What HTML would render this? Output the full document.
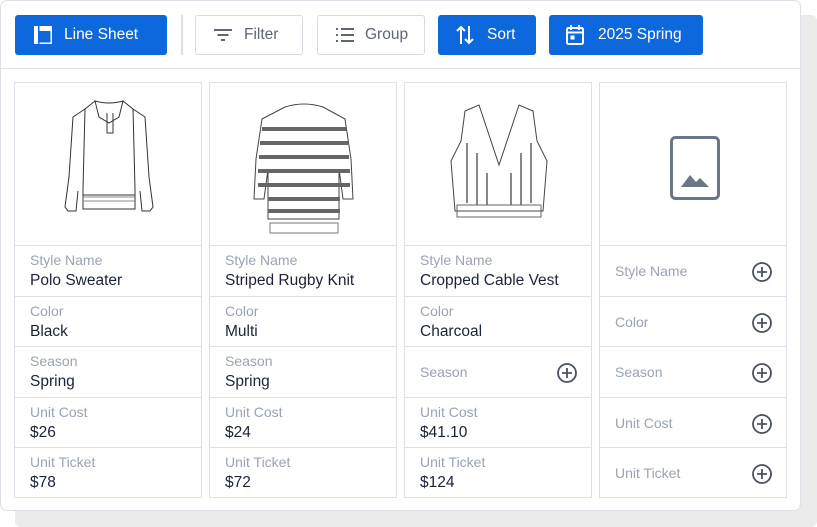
<!DOCTYPE html>
<html><head><meta charset="utf-8"><style>
*{box-sizing:border-box;margin:0;padding:0}
body{width:817px;height:527px;background:#fff;font-family:"Liberation Sans",sans-serif;position:relative;overflow:hidden}
.shadow{position:absolute;left:15px;top:15px;width:802px;height:512px;background:#ebebec;border-radius:6px}
.card{position:absolute;left:0;top:0;width:801px;height:511px;background:#fff;border:1.5px solid #dde1e7;border-radius:7px}
.tb{position:absolute;top:0;left:0;right:0;height:68px;border-bottom:1.5px solid #dde1e7}
.btn{position:absolute;top:14px;height:40px;border-radius:3px;display:flex;align-items:center;font-size:15.5px}
.blue{background:#0d68dd;color:#fff}
.wht{border:1.5px solid #d6dbe2;color:#5d6675;background:#fff}
.btn svg{position:absolute}
.btn span{position:absolute}
.col{position:absolute;top:81px;width:188px;height:416px;border:1.5px solid #dde1e7}
.img{height:163px;border-bottom:1.5px solid #dde1e7;position:relative}
.row{height:50.5px;border-bottom:1.5px solid #dde1e7;position:relative}
.row:last-child{border-bottom:none}
.lb{position:absolute;left:15px;top:6px;font-size:14px;color:#9aa3b2}
.lb.c{top:17px}
.v{position:absolute;left:15px;top:26px;font-size:15.5px;color:#1a2436}
.pl{position:absolute;right:13px;top:15px}
</style></head><body>
<div class="shadow"></div>
<div class="card">
<div class="tb">
 <div class="btn blue" style="left:14px;width:152px"><svg style="left:18px" width="20" height="20" viewBox="0 0 20 20"><rect x="1" y="1" width="18" height="18" fill="#fff"/><rect x="6.5" y="6" width="11" height="11.5" fill="#0d68dd"/><rect x="5" y="1" width="1.5" height="18" fill="#0d68dd"/></svg><span style="left:49px">Line Sheet</span></div>
 <div style="position:absolute;left:180px;top:14px;width:2px;height:40px;background:#dde1e7"></div>
 <div class="btn wht" style="left:194px;width:108px"><svg style="left:16px" width="22" height="20" viewBox="0 0 22 20"><path d="M2 5h18M5.5 10h11M9 15h4" stroke="#5d6675" stroke-width="2"/></svg><span style="left:48px">Filter</span></div>
 <div class="btn wht" style="left:316px;width:108px"><svg style="left:16px" width="22" height="20" viewBox="0 0 22 20"><path d="M2 4h2M7 4h13M2 10h2M7 10h13M2 16h2M7 16h13" stroke="#5d6675" stroke-width="2"/></svg><span style="left:47px">Group</span></div>
 <div class="btn blue" style="left:437px;width:98px"><svg style="left:17px" width="20" height="22" viewBox="0 0 20 22"><path d="M6 20V3M2 7l4-4 4 4M14 2v17M10 15l4 4 4-4" stroke="#fff" stroke-width="2" fill="none"/></svg><span style="left:49px">Sort</span></div>
 <div class="btn blue" style="left:548px;width:154px"><svg style="left:16px" width="20" height="22" viewBox="0 0 20 22"><rect x="2" y="4" width="16" height="16" rx="1.5" stroke="#fff" stroke-width="2" fill="none"/><path d="M2 8.5h16M6 1v5M14 1v5" stroke="#fff" stroke-width="2"/><rect x="5.5" y="11.5" width="4" height="4" fill="#fff"/></svg><span style="left:49px">2025 Spring</span></div>
</div>

<div class="col" style="left:13px"><div class="img"><svg width="188" height="163" viewBox="0 0 188 163" fill="none" stroke="#333" stroke-width="1"><path d="M80 18l-10 8-12 8-4 60-4 30 3 4 8 0 2-20M108 18l10 8 12 8 4 60 4 30-3 4-8 0-2-20M70 26l-2 80 0 20 52 0 0-20-2-80M80 18q14 4 28 0l-4 16-10 6-10-6z"/><path d="M68 112h52M92 30v20h6V30" /><path d="M68 114l52 0M68 118h52" stroke="#888"/></svg></div>
<div class="row"><div class="lb">Style Name</div><div class="v">Polo Sweater</div></div>
<div class="row"><div class="lb">Color</div><div class="v">Black</div></div>
<div class="row"><div class="lb">Season</div><div class="v">Spring</div></div>
<div class="row"><div class="lb">Unit Cost</div><div class="v">$26</div></div>
<div class="row"><div class="lb">Unit Ticket</div><div class="v">$78</div></div></div>

<div class="col" style="left:208px"><div class="img"><svg width="188" height="163" viewBox="0 0 188 163" fill="none" stroke="#444" stroke-width="1"><path d="M75 24q19 -6 38 0l22 12 6 40 2 40h-10l-4-30v50H58V86l-4 30H44l2-40 6-40z"/><g stroke="#666" stroke-width="4"><path d="M52 46h84M50 60h88M49 74h90M48 88h92M48 102h92M58 116h72M58 128h72"/></g><path d="M60 140h68v10H60z" stroke="#777"/></svg></div>
<div class="row"><div class="lb">Style Name</div><div class="v">Striped Rugby Knit</div></div>
<div class="row"><div class="lb">Color</div><div class="v">Multi</div></div>
<div class="row"><div class="lb">Season</div><div class="v">Spring</div></div>
<div class="row"><div class="lb">Unit Cost</div><div class="v">$24</div></div>
<div class="row"><div class="lb">Unit Ticket</div><div class="v">$72</div></div></div>

<div class="col" style="left:403px"><div class="img"><svg width="188" height="163" viewBox="0 0 188 163" fill="none" stroke="#444" stroke-width="1"><path d="M60 28l14-6 20 60 20-60 14 6 4 30 10 20-4 50H50l-4-50 10-20z"/><g stroke="#888" stroke-width="2"><path d="M62 60v60M72 70v52M82 90v32M106 90v32M116 70v52M126 60v60"/></g><path d="M52 122h84v12H52z" stroke="#666"/></svg></div>
<div class="row"><div class="lb">Style Name</div><div class="v">Cropped Cable Vest</div></div>
<div class="row"><div class="lb">Color</div><div class="v">Charcoal</div></div>
<div class="row"><div class="lb c">Season</div><svg class="pl" width="22" height="22" viewBox="0 0 22 22"><circle cx="11" cy="11" r="9" stroke="#4a5262" stroke-width="1.8" fill="none"/><path d="M11 6v10M6 11h10" stroke="#4a5262" stroke-width="1.8"/></svg></div>
<div class="row"><div class="lb">Unit Cost</div><div class="v">$41.10</div></div>
<div class="row"><div class="lb">Unit Ticket</div><div class="v">$124</div></div></div>

<div class="col" style="left:598px"><div class="img"><svg style="position:absolute;left:70px;top:53px" width="50" height="64" viewBox="0 0 50 64"><rect x="1.5" y="1.5" width="47" height="61" rx="4" stroke="#6b7787" stroke-width="3" fill="none"/><path d="M11 51l9-12 6 7 4-4 9 9z" fill="#6b7787"/></svg></div>
<div class="row"><div class="lb c">Style Name</div><svg class="pl" width="22" height="22" viewBox="0 0 22 22"><circle cx="11" cy="11" r="9" stroke="#4a5262" stroke-width="1.8" fill="none"/><path d="M11 6v10M6 11h10" stroke="#4a5262" stroke-width="1.8"/></svg></div>
<div class="row"><div class="lb c">Color</div><svg class="pl" width="22" height="22" viewBox="0 0 22 22"><circle cx="11" cy="11" r="9" stroke="#4a5262" stroke-width="1.8" fill="none"/><path d="M11 6v10M6 11h10" stroke="#4a5262" stroke-width="1.8"/></svg></div>
<div class="row"><div class="lb c">Season</div><svg class="pl" width="22" height="22" viewBox="0 0 22 22"><circle cx="11" cy="11" r="9" stroke="#4a5262" stroke-width="1.8" fill="none"/><path d="M11 6v10M6 11h10" stroke="#4a5262" stroke-width="1.8"/></svg></div>
<div class="row"><div class="lb c">Unit Cost</div><svg class="pl" width="22" height="22" viewBox="0 0 22 22"><circle cx="11" cy="11" r="9" stroke="#4a5262" stroke-width="1.8" fill="none"/><path d="M11 6v10M6 11h10" stroke="#4a5262" stroke-width="1.8"/></svg></div>
<div class="row"><div class="lb c">Unit Ticket</div><svg class="pl" width="22" height="22" viewBox="0 0 22 22"><circle cx="11" cy="11" r="9" stroke="#4a5262" stroke-width="1.8" fill="none"/><path d="M11 6v10M6 11h10" stroke="#4a5262" stroke-width="1.8"/></svg></div></div>
</div>
</body></html>
